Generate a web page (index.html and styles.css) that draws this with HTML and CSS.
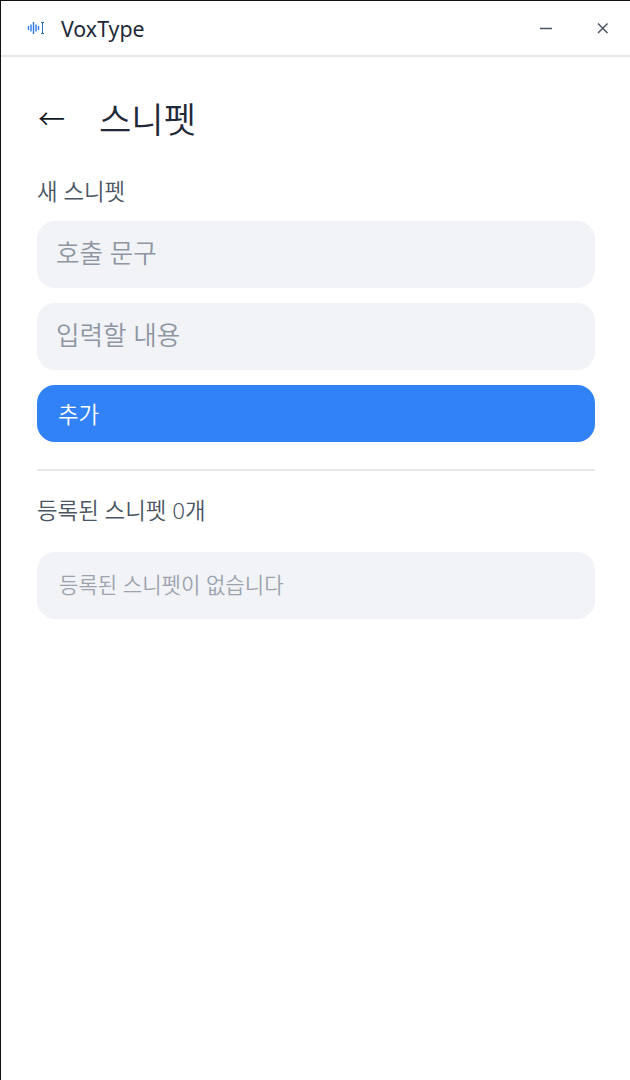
FILE: index.html
```html
<!DOCTYPE html>
<html lang="ko">
<head>
    <meta charset="UTF-8">
    <meta name="viewport" content="width=device-width, initial-scale=1.0">
    <title>VoxType</title>
    <link rel="stylesheet" href="styles.css">
</head>
<body>
<div class="window">
    <header class="titlebar">
        <div class="brand">
            <svg class="brand-icon" width="18" height="14" viewBox="0 0 18 14" fill="none" stroke="#2f7ae5" stroke-width="1.4">
                <path d="M1.5 5v4M4 3.5v7M6.5 1v12M9 3.5v7M11.5 5v4"/>
                <path d="M14 1.5h3M15.5 1.5v11M14 12.5h3" stroke="#2f6fc0" stroke-width="1"/>
            </svg>
            <span class="brand-name">VoxType</span>
        </div>
        <div class="window-controls">
            <svg width="14" height="14" viewBox="0 0 14 14" fill="none" stroke="#4b5563" stroke-width="1.5">
                <path d="M1 7.5h12"/>
            </svg>
            <svg width="14" height="14" viewBox="0 0 14 14" fill="none" stroke="#4b5563" stroke-width="1.5">
                <path d="M2 2.5l9.5 9.5M11.5 2.5L2 12"/>
            </svg>
        </div>
    </header>
    <main class="content">
        <div class="page-head">
            <span class="back-arrow">←</span>
            <h1>스니펫</h1>
        </div>
        <label class="section-label" for="triggerInput">새 스니펫</label>
        <div class="snippet-form">
            <input class="field" id="triggerInput" type="text" placeholder="호출 문구">
            <input class="field" id="contentInput" type="text" placeholder="입력할 내용">
            <button class="add-button">추가</button>
        </div>
        <hr class="divider">
        <div class="section-label list-label">등록된 스니펫 0개</div>
        <div class="empty-box">등록된 스니펫이 없습니다</div>
    </main>
</div>
</body>
</html>
```

FILE: styles.css
```css
* {
    box-sizing: border-box;
}
html, body {
    margin: 0;
    padding: 0;
    height: 100%;
    background: #fff;
}
body {
    font-family: "Noto Sans", "Noto Sans CJK KR", sans-serif;
    font-weight: 350;
}
.window {
    height: 100vh;
    border-top: 1px solid #111;
    border-left: 1px solid #111;
    display: flex;
    flex-direction: column;
}
.titlebar {
    height: 56px;
    flex-shrink: 0;
    display: flex;
    align-items: center;
    justify-content: space-between;
    padding: 0 20px 0 26px;
    border-bottom: 2px solid #e5e7eb;
}
.brand {
    display: flex;
    align-items: center;
    gap: 16px;
}
.brand-icon {
    display: block;
}
.brand-name {
    font-size: 21.33px;
    font-weight: 400;
    color: #1f2937;
}
.window-controls {
    display: flex;
    align-items: center;
    gap: 43px;
}
.window-controls svg {
    display: block;
}
.content {
    padding: 31px 35px 0 36px;
}
.page-head {
    display: flex;
    align-items: center;
    gap: 34px;
    height: 58px;
    margin-bottom: 31px;
}
.back-arrow {
    font-size: 27px;
    line-height: 1;
    margin-left: 1px;
    color: #111827;
    font-family: "Noto Sans CJK KR", sans-serif;
}
.page-head h1 {
    margin: 0;
    font-size: 35.2px;
    font-weight: 350;
    color: #1f2937;
}
.section-label {
    display: block;
    font-size: 22.4px;
    line-height: 30px;
    color: #4b5563;
}
.snippet-form {
    display: flex;
    flex-direction: column;
    gap: 15px;
    margin-top: 14px;
}
.field {
    display: block;
    width: 100%;
    height: 67px;
    padding: 0 19px 2px;
    border: none;
    border-radius: 18px;
    background: #f1f3f6;
    font-family: inherit;
    font-weight: 350;
    font-size: 25.6px;
    color: #1f2937;
    outline: none;
}
.field::placeholder {
    color: #8f96a3;
    opacity: 1;
}
.add-button {
    display: block;
    height: 57px;
    padding: 0 21px;
    border: none;
    border-radius: 18px;
    background: #3082f6;
    color: #fff;
    font-family: inherit;
    font-weight: 350;
    font-size: 22.4px;
    text-align: left;
}
.divider {
    margin: 27px 0 0;
    border: none;
    border-top: 2px solid #e5e7eb;
}
.list-label {
    margin-top: 25px;
}
.empty-box {
    display: flex;
    align-items: center;
    height: 67px;
    margin-top: 26px;
    padding: 0 22px 3px;
    border-radius: 18px;
    background: #f1f3f6;
    color: #9ca3af;
    font-size: 21.12px;
}
```
